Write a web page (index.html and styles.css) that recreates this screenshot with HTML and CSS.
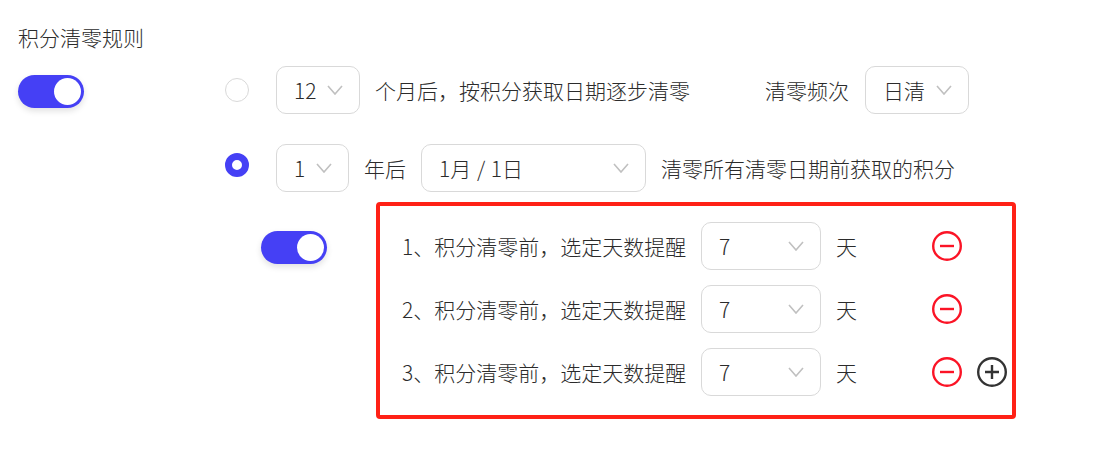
FILE: index.html
```html
<!DOCTYPE html>
<html lang="zh-CN">

<head>
  <meta charset="UTF-8">
  <title>积分清零规则</title>
  <link rel="stylesheet" href="styles.css">
</head>

<body>
  <h2 class="title">积分清零规则</h2>
  <div class="rule">
    <div class="toggle main-toggle"><span class="knob"></span></div>
    <div class="options">
      <div class="option first">
        <span class="radio"></span>
        <div class="select w84"><span>12</span><svg class="arrow" viewBox="0 0 16 10"><path d="M1 1l7 8 7-8"/></svg></div>
        <span class="text">个月后，按积分获取日期逐步清零</span>
        <span class="text freq">清零频次</span>
        <div class="select w104"><span>日清</span><svg class="arrow" viewBox="0 0 16 10"><path d="M1 1l7 8 7-8"/></svg></div>
      </div>
      <div class="option second">
        <span class="radio checked"></span>
        <div class="select w73"><span>1</span><svg class="arrow" viewBox="0 0 16 10"><path d="M1 1l7 8 7-8"/></svg></div>
        <span class="text">年后</span>
        <div class="select w225"><span class="date">1月 / 1日</span><svg class="arrow" viewBox="0 0 16 10"><path d="M1 1l7 8 7-8"/></svg></div>
        <span class="text">清零所有清零日期前获取的积分</span>
      </div>
      <div class="remind">
        <div class="toggle"><span class="knob"></span></div>
        <div class="remind-box">
          <div class="remind-row">
            <span class="remind-label">1、积分清零前，选定天数提醒</span>
            <div class="select w120"><span>7</span><svg class="arrow" viewBox="0 0 16 10"><path d="M1 1l7 8 7-8"/></svg></div>
            <span class="text day">天</span>
            <svg class="icon minus" viewBox="0 0 30 30"><circle cx="15" cy="15" r="13.8"/><path d="M8 15h14"/></svg>
          </div>
          <div class="remind-row">
            <span class="remind-label">2、积分清零前，选定天数提醒</span>
            <div class="select w120"><span>7</span><svg class="arrow" viewBox="0 0 16 10"><path d="M1 1l7 8 7-8"/></svg></div>
            <span class="text day">天</span>
            <svg class="icon minus" viewBox="0 0 30 30"><circle cx="15" cy="15" r="13.8"/><path d="M8 15h14"/></svg>
          </div>
          <div class="remind-row">
            <span class="remind-label">3、积分清零前，选定天数提醒</span>
            <div class="select w120"><span>7</span><svg class="arrow" viewBox="0 0 16 10"><path d="M1 1l7 8 7-8"/></svg></div>
            <span class="text day">天</span>
            <svg class="icon minus" viewBox="0 0 30 30"><circle cx="15" cy="15" r="13.8"/><path d="M8 15h14"/></svg>
            <svg class="icon plus" viewBox="0 0 30 30"><circle cx="15" cy="15" r="13.8"/><path d="M8 15h14M15 8v14"/></svg>
          </div>
        </div>
      </div>
    </div>
  </div>
</body>

</html>
```

FILE: styles.css
```css
body {
  margin: 0;
  padding: 25px 0 0 18px;
  font-family: "Noto Sans CJK SC", "Liberation Sans", sans-serif;
  font-size: 21px;
  font-weight: 300;
  color: #2b2b2b;
  background: #fff;
}

.title {
  margin: 0;
  font-size: 21px;
  font-weight: 300;
  line-height: 24px;
}

.rule {
  display: flex;
  margin-top: 17px;
}

.main-toggle {
  margin-top: 9px;
  margin-right: 141px;
}

.toggle {
  width: 66px;
  height: 33px;
  border-radius: 17px;
  background: #4540f5;
  box-shadow: 0 3px 6px rgba(0, 0, 0, 0.12);
  display: flex;
  justify-content: flex-end;
  align-items: center;
  padding-right: 3px;
  box-sizing: border-box;
  flex-shrink: 0;
}

.knob {
  width: 27px;
  height: 27px;
  border-radius: 50%;
  background: #fff;
}

.option {
  display: flex;
  align-items: center;
}

.second {
  margin-top: 30px;
}

.radio {
  width: 24px;
  height: 24px;
  box-sizing: border-box;
  border: 1px solid #d9d9d9;
  border-radius: 50%;
  margin-right: 27px;
}

.radio.checked {
  border: 7px solid #4540f5;
  margin-bottom: 6px;
}

.select {
  height: 48px;
  box-sizing: border-box;
  border: 1px solid #d9d9d9;
  border-radius: 10px;
  padding: 0 16px 0 17px;
  display: flex;
  align-items: center;
  justify-content: space-between;
  flex-shrink: 0;
}

.date {
  word-spacing: 1px;
}

.arrow {
  width: 16px;
  height: 10px;
  margin-bottom: 1px;
  fill: none;
  stroke: #c0c0c0;
  stroke-width: 1.6;
}

.w84 { width: 84px; }
.w73 { width: 73px; }
.w104 { width: 104px; }
.w225 { width: 225px; }
.w120 { width: 120px; }

.text {
  margin: 0 15px;
  white-space: nowrap;
}

.freq {
  margin-left: 60px;
  margin-right: 16px;
}

.remind {
  display: flex;
  margin-top: 10px;
}

.remind > .toggle {
  margin: 29px 49px 0 36px;
}

.remind-box {
  width: 640px;
  height: 217px;
  box-sizing: border-box;
  border: 4px solid #ff2116;
  border-radius: 4px;
  padding: 16px 0 0 22px;
  flex-shrink: 0;
}

.remind-row {
  display: flex;
  align-items: center;
  height: 48px;
  margin-bottom: 15px;
}

.remind-label {
  width: 299px;
  white-space: nowrap;
}

.day {
  width: 21px;
  margin-right: 75px;
}

.icon {
  width: 30px;
  height: 30px;
  fill: none;
  stroke-width: 2.4;
  flex-shrink: 0;
}

.minus {
  stroke: #fb1426;
}

.plus {
  stroke: #333;
  margin-left: 15px;
}
```
